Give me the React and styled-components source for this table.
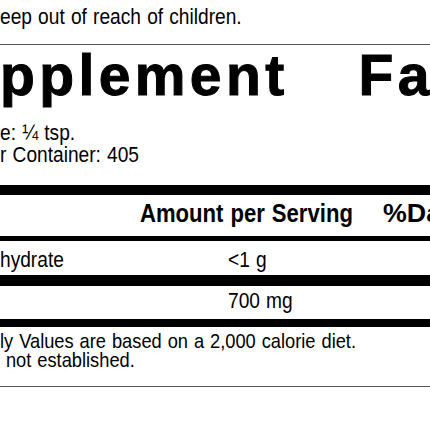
import styled, { createGlobalStyle } from 'styled-components'

const GlobalStyle = createGlobalStyle`
    html, body {
        margin: 0;
        padding: 0;
        background: #fff;
    }
`

const App = () => {
    return (
        <Page>
            <GlobalStyle />
            <Line $top={6}>
                <Cond>eep out of reach of children.</Cond>
            </Line>
            <Rule $top={16} />
            <Title>
                <span>pplement</span>
                <span>Facts</span>
            </Title>
            <Line $top={18}>
                <Cond>e: ¼ tsp.</Cond>
            </Line>
            <Line>
                <Cond>r Container: 405</Cond>
            </Line>
            <Bar $top={19} $h={10} />
            <Header>
                <Cond $s={0.85}>Amount per Serving</Cond>
                <Cond $s={1.03}>%Daily Value</Cond>
            </Header>
            <Bar $h={5} />
            <Row $pt={8} $pb={4}>
                <Cond>hydrate</Cond>
                <Cond>&lt;1 g</Cond>
            </Row>
            <Bar $h={11} />
            <Row $pt={4} $pb={7}>
                <span />
                <Cond>700 mg</Cond>
            </Row>
            <Bar $h={8} />
            <Notes>
                <div>
                    <Cond>ly Values are based on a 2,000 calorie diet.</Cond>
                </div>
                <div>
                    <Cond>&nbsp;not established.</Cond>
                </div>
            </Notes>
            <Rule $top={17} />
        </Page>
    )
}

const Page = styled.div`
    width: 430px;
    height: 430px;
    overflow: hidden;
    background: #fff;
    color: #000;
    font-family: "Liberation Sans", Arial, sans-serif;
    display: flex;
    flex-direction: column;
`

// Helvetica Condensed look-alike: Liberation Sans squeezed horizontally
const Cond = styled.span`
    display: inline-block;
    white-space: nowrap;
    word-spacing: 1px;
    transform: scaleX(${(p) => p.$s || 0.87});
    transform-origin: left center;
`

const Line = styled.div`
    margin-top: ${(p) => p.$top || 0}px;
    font-size: 22px;
    line-height: 22px;
    height: 22px;
    white-space: nowrap;
`

const Rule = styled.div`
    margin-top: ${(p) => p.$top || 0}px;
    height: 1px;
    background: #555;
    flex-shrink: 0;
`

const Title = styled.div`
    margin-top: 2px;
    display: flex;
    gap: 70px;
    font-weight: 700;
    font-size: 57px;
    line-height: 57px;
    letter-spacing: 4.4px;
    -webkit-text-stroke: 1px #000;
    white-space: nowrap;
`

const Bar = styled.div`
    margin-top: ${(p) => p.$top || 0}px;
    height: ${(p) => p.$h}px;
    background: #000;
    flex-shrink: 0;
`

const Header = styled.div`
    display: grid;
    grid-template-columns: 243px auto;
    padding: 0 0 5px 140px;
    font-weight: 700;
    font-size: 26px;
    line-height: 36px;
    height: 36px;
    white-space: nowrap;
    overflow: hidden;
`

const Row = styled.div`
    display: grid;
    grid-template-columns: 228px auto;
    padding: ${(p) => p.$pt}px 0 ${(p) => p.$pb}px;
    font-size: 22px;
    line-height: 22px;
    height: 22px;
    white-space: nowrap;
`

const Notes = styled.div`
    padding-top: 4px;
    font-size: 21px;
    line-height: 19px;
    white-space: nowrap;
`

export default App
